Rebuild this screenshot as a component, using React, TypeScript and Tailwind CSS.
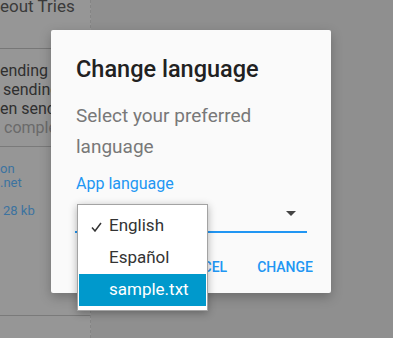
const App = () => {
	return (
		<div className="relative w-[393px] h-[338px] overflow-hidden bg-[#8f8f8f] font-['Roboto',sans-serif]">
			<BackgroundPage />
			<LanguageDialog />
		</div>
	);
}

export default App;

const BackgroundPage = () => {
	return (
		<div className="flex h-full">
			<div className="w-[91px] h-full bg-[#969696] border-r border-dashed border-[#858585] flex flex-col">
				<div className="h-[49px] border-b border-[#777]">
					<span className="block text-[17px] leading-[12px] text-[#3a3a3a] whitespace-nowrap">eout Tries</span>
				</div>
				<div className="h-[98px] border-b border-[#7a7a7a] pt-[12px] text-[16px] leading-[19px] text-[#2f2f2f] whitespace-nowrap">
					<div>ending</div>
					<div className="pl-[3px]">sending</div>
					<div>en send</div>
					<div className="pl-[4px] text-[#6a6a6a]">comple</div>
				</div>
				<div className="pt-[15px] text-[13px] leading-[14px] text-[#3c73a0] whitespace-nowrap">
					<div>on</div>
					<div>.net</div>
					<div className="pl-[3px] mt-[14px]">28 kb</div>
				</div>
				<div className="mt-auto h-[23px] border-t border-[#7a7a7a]"></div>
			</div>
			<div className="flex-1"></div>
		</div>
	)
}

const LanguageDialog = () => {
	return (
		<div className="absolute left-[51px] top-[30px] w-[280px] h-[263px] bg-[#fafafa] rounded-[2px] shadow-[0_4px_12px_rgba(0,0,0,0.25)] flex flex-col pl-[25px] pr-[24px] pt-[25px]">
			<h2 className="text-[23.5px] leading-[28px] font-medium text-[#212121] whitespace-nowrap">Change language</h2>
			<p className="mt-[17px] text-[19px] leading-[31px] text-[#787878]">Select your preferred language</p>
			<span className="mt-[12px] text-[16px] leading-[20px] text-[#2196f3]">App language</span>
			<div className="relative h-[38.5px] border-b-2 border-[#2196f3] -ml-[1px]">
				<svg className="absolute right-[11px] top-[17px]" width="10" height="5" viewBox="0 0 10 5">
					<path d="M0 0 L10 0 L5 5 Z" fill="#444" />
				</svg>
			</div>
			<div className="mt-[24.5px] flex justify-end gap-[30px] -mr-[6px] text-[14px] leading-[20px] font-medium text-[#2196f3]">
				<span>CANCEL</span>
				<span>CHANGE</span>
			</div>
			<LanguageMenu />
		</div>
	)
}

const LanguageMenu = () => {
	return (
		<div className="absolute left-[26px] top-[174px] w-[131px] bg-white border border-[#a3a3a3] px-[1px] pt-[5px] pb-[4px] shadow-[0_2px_8px_rgba(0,0,0,0.3)]">
			{options.map((item, idx) => {
				return (
					<div
						key={idx}
						className={item.active
							? "relative h-[32px] flex items-center pl-[30px] text-[17px] bg-[#0099cc] text-white"
							: "relative h-[32px] flex items-center pl-[30px] text-[17px] text-[#333]"}
					>
						{item.checked && (
							<svg className="absolute left-[12px] top-[12px]" width="11" height="10" viewBox="0 0 11 10">
								<path d="M1 5.5 L4 9 L10 1" fill="none" stroke="#333" strokeWidth="1.5" />
							</svg>
						)}
						<span>{item.label}</span>
					</div>
				)
			})}
		</div>
	)
}

const options = [
	{ label: "English", checked: true },
	{ label: "Español" },
	{ label: "sample.txt", active: true },
]
